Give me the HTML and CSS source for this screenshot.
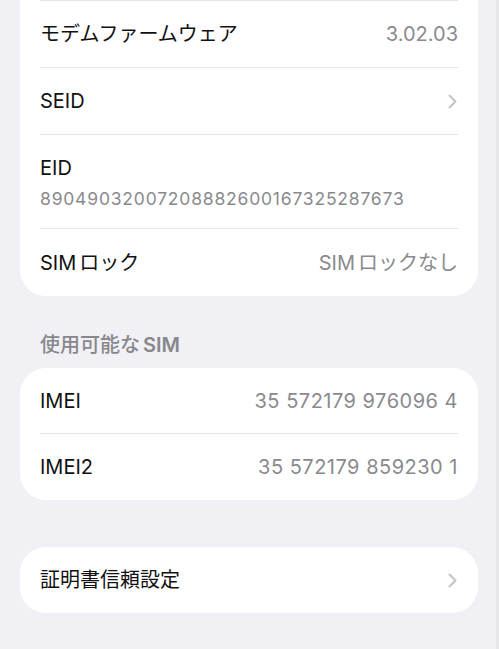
FILE: index.html
```html
<!DOCTYPE html>
<html lang="ja">
<head>
<meta charset="utf-8">
<title>情報</title>
<link rel="stylesheet" href="styles.css">
</head>
<body>
<div class="page">
  <div class="card card-top">
    <div class="row">
      <span class="label">モデムファームウェア</span>
      <span class="value">3.02.03</span>
    </div>
    <div class="row">
      <span class="label">SEID</span>
      <svg class="chev" width="9" height="15" viewBox="0 0 9 15"><path d="M1.5 1.5 L7.5 7.5 L1.5 13.5" fill="none" stroke="#c4c4c7" stroke-width="2" stroke-linecap="round" stroke-linejoin="round"/></svg>
    </div>
    <div class="row row-tall">
      <span class="label">EID</span>
      <span class="sub">89049032007208882600167325287673</span>
    </div>
    <div class="row row-last">
      <span class="label">SIM<span class="jp">ロック</span></span>
      <span class="value">SIM<span class="jp">ロックなし</span></span>
    </div>
  </div>

  <div class="section-title">使用可能な<span class="jp-lat">SIM</span></div>
  <div class="card card-sim">
    <div class="row row-first">
      <span class="label">IMEI</span>
      <span class="value num">35 572179 976096 4</span>
    </div>
    <div class="row row-b">
      <span class="label">IMEI2</span>
      <span class="value num">35 572179 859230 1</span>
    </div>
  </div>

  <div class="card card-cert">
    <div class="row row-single">
      <span class="label">証明書信頼設定</span>
      <svg class="chev" width="9" height="15" viewBox="0 0 9 15"><path d="M1.5 1.5 L7.5 7.5 L1.5 13.5" fill="none" stroke="#c4c4c7" stroke-width="2" stroke-linecap="round" stroke-linejoin="round"/></svg>
    </div>
  </div>
</div>
</body>
</html>
```

FILE: styles.css
```css
* { box-sizing: border-box; }
html, body { margin: 0; padding: 0; }
body {
  background: #f0f0f5;
  font-family: Inter, "Noto Sans CJK JP", sans-serif;
  color: #111;
  width: 499px;
  height: 649px;
  overflow: hidden;
  border-right: 3px solid #e6e6eb;
}
.page {
  padding: 0 18px 0 20px;
  display: flex;
  flex-direction: column;
}
.card {
  background: #fff;
  border-radius: 26px;
  padding: 0 20px;
}
.card-top {
  border-radius: 0 0 26px 26px;
}
.row {
  display: flex;
  align-items: center;
  justify-content: space-between;
  height: 67px;
  border-top: 1px solid #e4e4e7;
}
.row-tall {
  height: 94px;
  flex-direction: column;
  align-items: flex-start;
  justify-content: flex-start;
  padding-top: 21px;
  gap: 8px;
}
.row-last { height: 68px; }
.row-first { border-top: none; height: 65px; }
.row-b { height: 67px; }
.row-single { border-top: none; height: 66px; }
.label {
  font-size: 20px;
  line-height: 24px;
  font-weight: 400;
  color: #111;
}
.value {
  font-size: 20px;
  line-height: 24px;
  color: #8a8a8e;
}
.num { letter-spacing: 0.5px; }
.jp { margin-left: 3px; }
.sub {
  font-size: 17.5px;
  line-height: 22px;
  color: #8a8a8e;
  letter-spacing: 0.8px;
}
.chev { display: block; margin-right: 1px; }
.section-title {
  margin: 37px 0 11px 20px;
  font-size: 20px;
  line-height: 24px;
  font-weight: 500;
  color: #88888c;
}
.jp-lat { margin-left: 3px; font-weight: 600; }
.card-cert { margin-top: 47px; }
```
